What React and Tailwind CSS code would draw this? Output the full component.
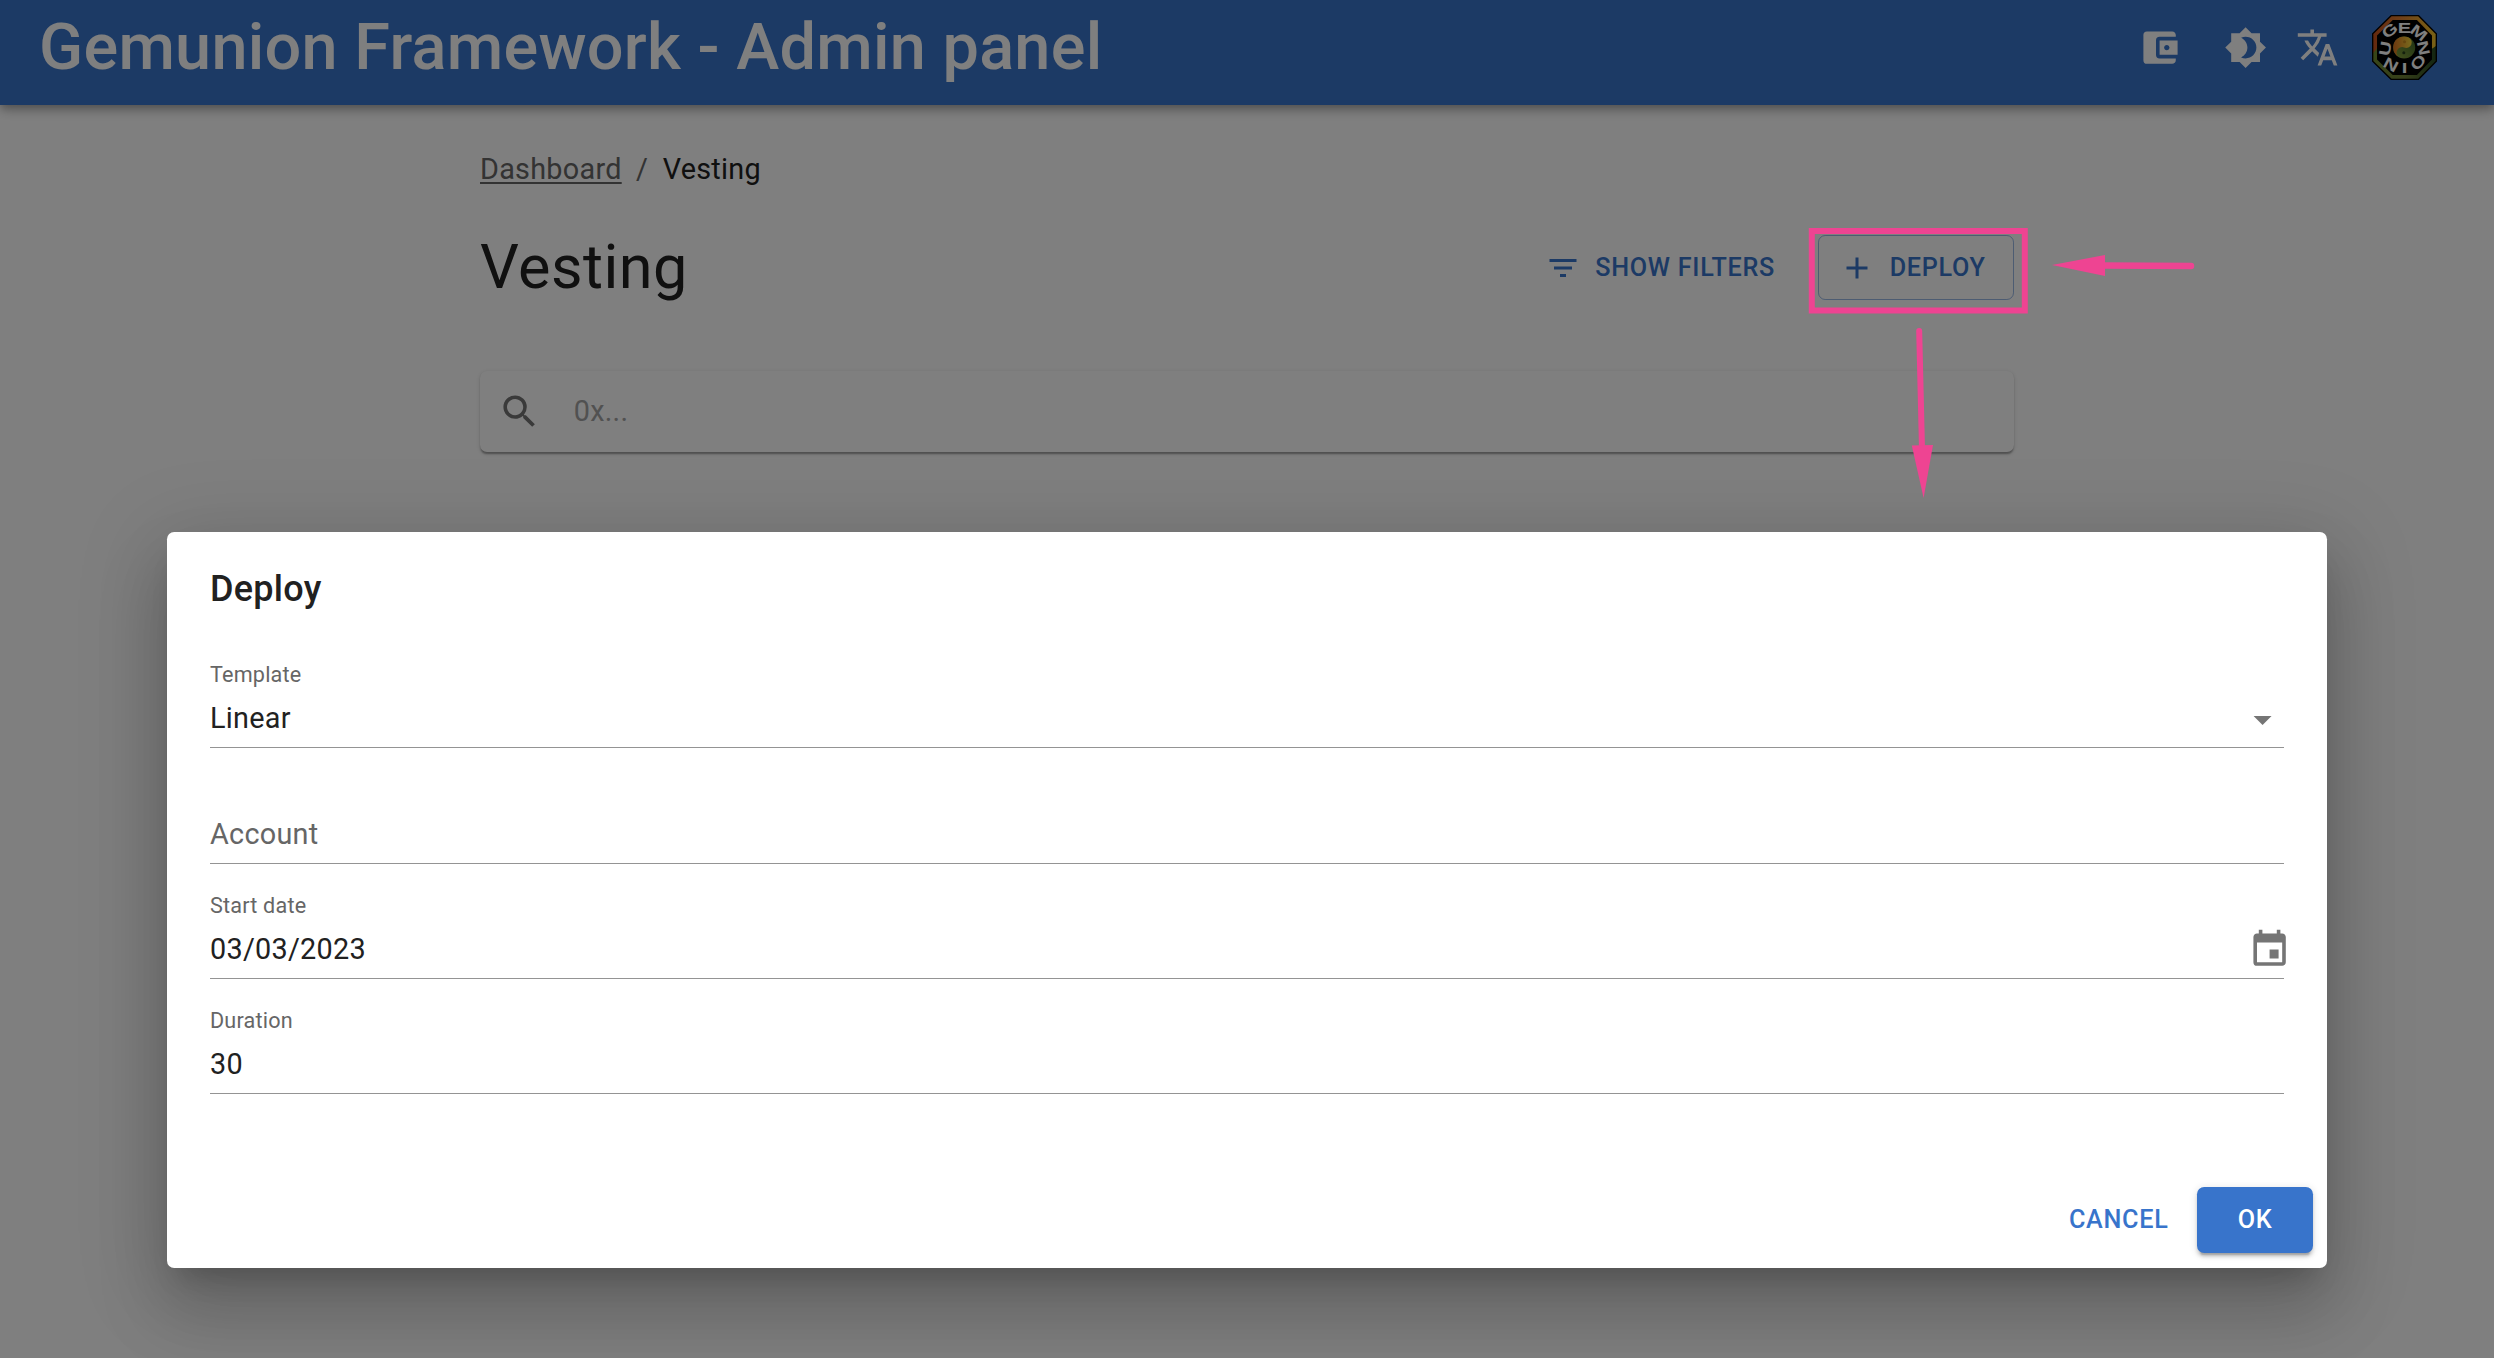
import React from "react";
import {
  MdAccountBalanceWallet,
  MdBrightness4,
  MdTranslate,
  MdSearch,
  MdFilterList,
  MdAdd,
  MdArrowDropDown,
  MdEvent,
} from "react-icons/md";

const LETTERS = [
  ["G", 52, 46, -38],
  ["E", 97, 37, 0],
  ["M", 140, 52, 38],
  ["N", 154, 98, 78],
  ["O", 138, 142, 130],
  ["I", 97, 157, 0],
  ["N", 57, 148, 28],
  ["U", 39, 100, -80],
];

function Logo() {
  return (
    <svg viewBox="0 0 194 194" className="size-[65px] shrink-0">
      <defs>
        <linearGradient id="rimTop" x1="0" x2="1">
          <stop offset="0" stopColor="#c8501c" />
          <stop offset="0.45" stopColor="#e08030" />
          <stop offset="1" stopColor="#f2c52c" />
        </linearGradient>
        <linearGradient id="rimBottom" x1="0" x2="1">
          <stop offset="0" stopColor="#6f8c30" />
          <stop offset="0.5" stopColor="#6c7c34" />
          <stop offset="1" stopColor="#264a22" />
        </linearGradient>
        <linearGradient id="yang" x1="1" y1="0.1" x2="0" y2="0.7">
          <stop offset="0" stopColor="#f4dc3c" />
          <stop offset="1" stopColor="#dc6a1c" />
        </linearGradient>
        <linearGradient id="yin" x1="1" y1="0" x2="0" y2="1">
          <stop offset="0" stopColor="#3a6428" />
          <stop offset="1" stopColor="#8aa43c" />
        </linearGradient>
      </defs>
      <path d="M57 2H139L192 56V138L139 192H57L2 138V56Z" fill="url(#rimTop)" />
      <path d="M2 116L14 100H180L192 92V138L139 192H57L2 138Z" fill="url(#rimBottom)" />
      <path d="M57 2H139L192 56V138L139 192H57L2 138V56Z" fill="none" stroke="#000" strokeWidth="4" />
      <path d="M62 15H134L179 61V133L134 179H62L15 133V61Z" fill="#000" />
      {LETTERS.map(([c, x, y, r], i) => (
        <text
          key={i}
          transform={`translate(${x} ${y}) rotate(${r}) scale(1.2 0.92)`}
          y="18"
          textAnchor="middle"
          fontSize="50"
          className="fill-white font-['Liberation_Sans',sans-serif] font-bold"
        >
          {c}
        </text>
      ))}
      <circle cx="96" cy="97" r="37" fill="#000" />
      <circle cx="96" cy="97" r="33" fill="url(#yin)" />
      <path
        d="M96 64A33 33 0 0 0 96 130A16.5 16.5 0 0 1 96 97A16.5 16.5 0 0 0 96 64Z"
        transform="rotate(22 96 97)"
        fill="url(#yang)"
      />
      <circle cx="97" cy="80" r="4.5" fill="#c98c20" />
      <circle cx="95" cy="113" r="4.5" fill="#28401c" />
    </svg>
  );
}

function Field({ label, value, icon }) {
  return (
    <div className="flex h-[86.4px] flex-col justify-between border-b border-[#949494]">
      <div className="h-[26.8px] text-[21.6px] leading-[26px] tracking-[0.00938em] text-[#666]">
        {value ? label : ""}
      </div>
      <div className="flex h-[57.6px] items-center justify-between pt-[1px]">
        <span className={value ? "tracking-[0.00938em] text-[#212121]" : "tracking-[0.00938em] text-[#666]"}>
          {value || label}
        </span>
        {icon}
      </div>
    </div>
  );
}

function Annotations() {
  return (
    <svg viewBox="0 0 400 280" className="pointer-events-none absolute left-[1800px] top-[224px] z-20 h-[280px] w-[400px]" fill="#ee4492" stroke="#ee4492">
      <rect x="11.8" y="7" width="213" height="79.5" fill="none" strokeWidth="6" />
      <path d="M302 41.5L391 42" strokeWidth="6.5" strokeLinecap="round" />
      <path d="M252 41L305 31V52Z" stroke="none" />
      <path d="M119.2 107L122 225" strokeWidth="6" strokeLinecap="round" />
      <path d="M111.8 221.5L133 221L123.6 274Z" stroke="none" />
    </svg>
  );
}

export default function App() {
  return (
    <div className="relative h-[1358px] w-[2494px] overflow-hidden bg-white font-[Roboto,sans-serif] text-[28.8px] leading-[43.2px] text-[#212121]">
      <header className="flex h-[105px] items-center bg-[#3874cb] pb-[10px] pl-[39px] pr-[57px] text-white shadow-[0_3.6px_7.2px_-1.8px_rgba(0,0,0,0.2),0_7.2px_9px_0_rgba(0,0,0,0.14),0_1.8px_18px_0_rgba(0,0,0,0.12)]">
        <h1 className="grow text-[64.8px] font-medium leading-[95px] tracking-[0.0043em]">
          Gemunion Framework - Admin panel
        </h1>
        <MdAccountBalanceWallet className="mr-[43.2px] size-[43.2px]" />
        <MdBrightness4 className="mr-[28.8px] size-[43.2px]" />
        <MdTranslate className="mr-[32.8px] size-[43.2px]" />
        <Logo />
      </header>

      <main className="mx-auto w-[1534px] pt-[43px]">
        <nav className="flex h-[43px] items-center tracking-[0.00938em]">
          <a className="text-[#666] underline decoration-[1.8px] underline-offset-[3px]">Dashboard</a>
          <span className="mx-[14.4px] text-[#666]">/</span>
          <span>Vesting</span>
        </nav>

        <div className="mt-[36px] flex h-[81px] items-center">
          <h2 className="grow pb-[2px] text-[61.2px] leading-[76px] tracking-[0.00735em]">Vesting</h2>
          <button className="mr-[34px] flex h-[65px] items-center gap-[14.4px] px-[9px] text-[25.2px] font-medium tracking-[0.02857em] text-[#3874cb]">
            <MdFilterList className="size-[36px]" />
            <span className="pt-[1px]">SHOW FILTERS</span>
          </button>
          <button className="flex h-[65px] w-[196px] items-center justify-center gap-[14.4px] rounded-[7.2px] border border-[#3874cb]/50 pr-[7px] text-[25.2px] font-medium tracking-[0.02857em] text-[#3874cb]">
            <MdAdd className="size-[36px]" />
            <span className="pt-[1px]">DEPLOY</span>
          </button>
        </div>

        <div className="mt-[63px] flex h-[81px] items-center rounded-[7.2px] bg-white pl-[18px] shadow-[0_3.6px_1.8px_-1.8px_rgba(0,0,0,0.2),0_1.8px_1.8px_0_rgba(0,0,0,0.14),0_1.8px_5.4px_0_rgba(0,0,0,0.12)]">
          <MdSearch className="size-[43.2px] text-[#757575]" />
          <span className="ml-[32.5px] tracking-[0.00938em] text-[#a3a3a3]">0x...</span>
        </div>
      </main>

      <div className="absolute inset-0 z-10 flex justify-center bg-black/50 pt-[532px]">
        <div className="flex h-[736px] w-[2160px] flex-col rounded-[7.2px] bg-white px-[43px] shadow-[0_19.8px_27px_-12.6px_rgba(0,0,0,0.2),0_43.2px_68.4px_5.4px_rgba(0,0,0,0.14),0_16.2px_82.8px_14.4px_rgba(0,0,0,0.12)]">
          <h2 className="pt-[29px] text-[36px] font-medium leading-[57.6px] tracking-[0.0075em]">Deploy</h2>
          <div className="mt-[43.2px] flex flex-col gap-[29px]">
            <Field
              label="Template"
              value="Linear"
              icon={<MdArrowDropDown className="mt-[1px] size-[43.2px] text-[#757575]" />}
            />
            <Field label="Account" />
            <Field
              label="Start date"
              value="03/03/2023"
              icon={<MdEvent className="mr-[-7.2px] size-[43.2px] text-[#757575]" />}
            />
            <Field label="Duration" value="30" />
          </div>
          <div className="mb-[15px] mr-[-29px] mt-auto flex items-center justify-end text-[25.2px] font-medium tracking-[0.02857em]">
            <button className="px-[28.5px] text-[#3874cb]">CANCEL</button>
            <button className="h-[66px] w-[116px] rounded-[7.2px] bg-[#3874cb] text-white shadow-[0_5.4px_1.8px_-3.6px_rgba(0,0,0,0.2),0_3.6px_3.6px_0_rgba(0,0,0,0.14),0_1.8px_9px_0_rgba(0,0,0,0.12)]">
              OK
            </button>
          </div>
        </div>
      </div>

      <Annotations />
    </div>
  );
}
